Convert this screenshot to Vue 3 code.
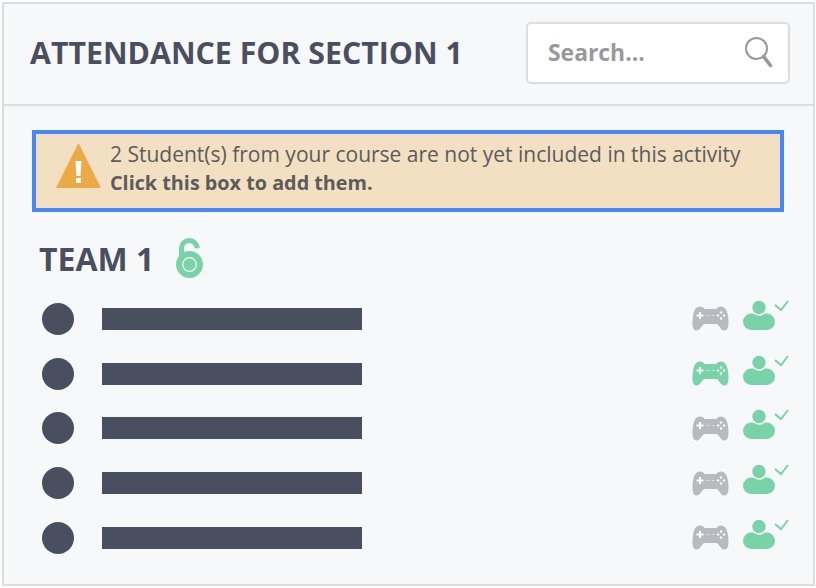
<template>
  <div class="page">
    <div class="panel">
      <header class="header">
        <h1 class="title">ATTENDANCE FOR SECTION 1</h1>
        <div class="search">
          <span class="searchText">Search...</span>
          <svg class="searchIcon" width="30" height="32" viewBox="0 0 30 32">
            <circle cx="13.5" cy="11.5" r="10.5" fill="none" stroke="#999" stroke-width="2" />
            <path d="M20.5 19.5 L27.5 28.5" stroke="#999" stroke-width="3.6" stroke-linecap="round" />
          </svg>
        </div>
      </header>
      <div class="content">
        <div class="notice">
          <svg class="warn" width="45" height="45" viewBox="0 0 45 45">
            <path d="M22.5 0 L45 45 L0 45 Z" fill="#ecaa47" />
            <path d="M19.5 18 H25.5 L24.5 33 H20.5 Z" fill="#fff" />
            <rect x="20" y="35" width="5" height="5" fill="#fff" />
          </svg>
          <div class="noticeText">
            <div>2 Student(s) from your course are not yet included in this activity</div>
            <strong>Click this box to add them.</strong>
          </div>
        </div>
        <div class="team">
          <h2 class="teamName">TEAM 1</h2>
          <svg class="lock" width="28" height="40" viewBox="0 0 28 40">
            <path d="M5.5 20 V10.3 A7.75 7.75 0 0 1 21 10.3 V8.5" fill="none" stroke="#7ad3a8" stroke-width="5" stroke-linecap="round" />
            <circle cx="13.5" cy="26.5" r="13.5" fill="#7ad3a8" />
            <circle cx="13.5" cy="26.5" r="6.8" fill="none" stroke="#f7f8fa" stroke-width="1.2" />
          </svg>
        </div>
        <ul class="students">
          <li v-for="s in students" :key="s.id" class="student">
            <span class="avatar"></span>
            <span class="name"></span>
            <svg class="pad" width="37" height="25" viewBox="0 0 37 25">
              <path :fill="s.playing ? green : grey" d="M8 0.5 C10.5 0.5 12 1.5 12.5 3 H24.5 C25 1.5 26.5 0.5 29 0.5 C33 0.5 35 4 36 10 C37 17 37 24.5 32.5 24.5 C28.5 24.5 27.5 19.5 25 18 H12 C9.5 19.5 8.5 24.5 4.5 24.5 C0 24.5 0 17 1 10 C2 4 4 0.5 8 0.5 Z" />
              <path d="M4.5 8.5 H7 V6 H9 V8.5 H11.5 V10.5 H9 V13 H7 V10.5 H4.5 Z" fill="#f7f8fa" />
              <circle cx="29" cy="6.5" r="1.2" fill="#f7f8fa" />
              <circle cx="29" cy="12.5" r="1.2" fill="#f7f8fa" />
              <circle cx="26" cy="9.5" r="1.2" fill="#f7f8fa" />
              <circle cx="32" cy="9.5" r="1.2" fill="#f7f8fa" />
              <rect x="14.5" y="9" width="3" height="1" fill="#f7f8fa" opacity="0.6" />
              <rect x="19.5" y="9" width="3" height="1" fill="#f7f8fa" opacity="0.6" />
            </svg>
            <svg class="present" width="46" height="32" viewBox="0 0 46 32">
              <rect x="0" y="13.5" width="32" height="16.5" rx="8.25" fill="#7ad3a8" />
              <circle cx="16" cy="7.5" r="7.5" fill="#7ad3a8" stroke="#f7f8fa" stroke-width="1.6" />
              <path d="M32 5 L38 10 L45 1" fill="none" stroke="#7ad3a8" stroke-width="2" />
            </svg>
          </li>
        </ul>
      </div>
    </div>
  </div>
</template>

<script setup>
const green = "#7ad3a8";
const grey = "#b9babf";

const students = [
  { id: 1, playing: false },
  { id: 2, playing: true },
  { id: 3, playing: false },
  { id: 4, playing: false },
  { id: 5, playing: false },
];
</script>

<style>
html,
body {
  margin: 0;
  background: #fff;
}
</style>

<style scoped>
.page {
  width: 816px;
  height: 588px;
  padding: 2px 1px 2px 2px;
  box-sizing: border-box;
  font-family: "Open Sans", "Noto Sans", sans-serif;
}
.panel {
  height: 100%;
  box-sizing: border-box;
  border: 2px solid #dcdde0;
  background: #f7f8fa;
}
.header {
  height: 102px;
  box-sizing: border-box;
  border-bottom: 2px solid #dcdde0;
  display: flex;
  align-items: center;
  justify-content: space-between;
  padding: 0 23px 0 26px;
}
.title {
  margin: -3px 0 0;
  font-size: 30.3px;
  font-weight: 700;
  color: #4a4f60;
}
.search {
  width: 264px;
  height: 62px;
  box-sizing: border-box;
  margin-top: -2px;
  border: 2px solid #dcdde0;
  border-radius: 5px;
  background: #fff;
  display: flex;
  align-items: center;
  justify-content: space-between;
  padding: 0 15px 0 20px;
}
.searchText {
  font-size: 22.9px;
  font-weight: 700;
  color: #999;
  margin-top: -2px;
}
.content {
  padding: 24px 29px 0 28px;
}
.notice {
  height: 82px;
  box-sizing: border-box;
  border: 4px solid #4a86f7;
  background: #f3e0c2;
  display: flex;
  align-items: flex-start;
  gap: 9px;
  padding: 6px 0 0 20px;
}
.warn {
  margin-top: 3px;
}
.noticeText {
  font-size: 21px;
  line-height: 28px;
  color: #5c5c5c;
}
.noticeText strong {
  font-size: 19.8px;
}
.team {
  display: flex;
  align-items: center;
  gap: 22px;
  height: 40px;
  margin: 26px 0 0 7px;
}
.teamName {
  margin: 0;
  font-size: 32px;
  font-weight: 700;
  color: #4a4f60;
}
.students {
  list-style: none;
  margin: 13.5px 0 0;
  padding: 0;
}
.student {
  height: 54.75px;
  display: flex;
  align-items: center;
  padding-left: 10px;
}
.avatar {
  width: 32px;
  height: 32px;
  border-radius: 50%;
  background: #4a4f60;
}
.name {
  width: 260px;
  height: 22px;
  margin-left: 28px;
  background: #4a4f60;
}
.pad {
  margin-left: auto;
}
.present {
  margin: 0 -5px 6px 14px;
}
</style>
